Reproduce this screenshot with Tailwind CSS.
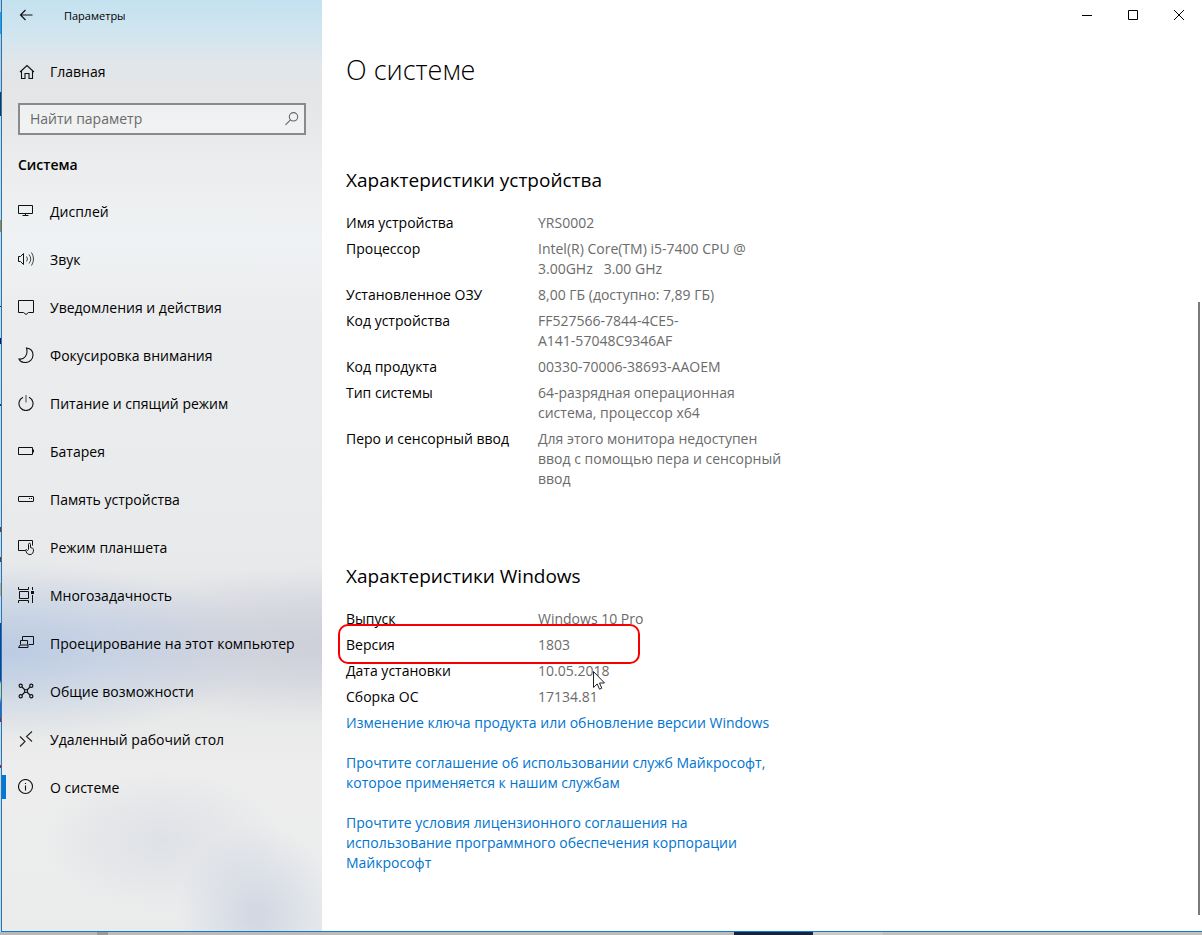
<!DOCTYPE html>
<html lang="ru">
<head>
  <meta charset="UTF-8" />
  <meta name="viewport" content="width=device-width, initial-scale=1" />
  <title>Параметры</title>
  <script src="https://cdn.jsdelivr.net/npm/@tailwindcss/browser@4"></script>
</head>
<body class="min-h-screen flex flex-col bg-[#c6c6c6] font-['Open_Sans','Noto_Sans',sans-serif] text-sm leading-5 text-black">

  <div class="flex-1 flex">
    <!-- Desktop edge on the left -->
    <div class="w-px shrink-0 bg-[linear-gradient(to_bottom,#c6c6c6_0_12px,#2a9fd6_12px_34px,#c6c6c6_34px_92px,#333_92px_116px,#d4d4d4_116px_220px,#c87d10_220px_232px,#d4d4d4_232px_306px,#222_306px_307px,#d4d4d4_307px_338px,#101050_338px_344px,#d4d4d4_344px_404px,#333_404px_406px,#d4d4d4_406px_527px,#7a3a10_527px_532px,#d4d4d4_532px_557px,#7a3a10_557px_562px,#d4d4d4_562px_583px,#e0a860_583px_596px,#d4d4d4_596px_623px,#1c3f80_623px_680px,#d8d080_684px_697px,#3a62b0_703px_718px,#c01818_718px_722px,#d4d4d4_722px_765px,#c01818_765px_768px,#d4d4d4_768px)]"></div>

    <!-- Settings window -->
    <div class="flex-1 flex border-l border-b border-[#1979ca]">

      <aside class="w-80 shrink-0 bg-[radial-gradient(ellipse_80px_90px_at_255px_915px,#c4cbde99_10%,#c4cbde55_50%,#c4cbde00),radial-gradient(ellipse_120px_70px_at_160px_840px,#d6dae299_0%,#d6dae255_50%,#d6dae200),radial-gradient(ellipse_260px_90px_at_0px_650px,#b4c8e4cc_0%,#b4c8e466_50%,#b4c8e400),radial-gradient(ellipse_240px_80px_at_320px_645px,#c6c8d499_0%,#c6c8d455_50%,#c6c8d400),linear-gradient(to_bottom,#c3e2ef_0px,#cfe5ef_30px,#e0e6ea_62px,#e4e5e6_90px,#ebeced_160px,#eff2f4_240px,#ebecee_320px,#eaebec_480px,#e8e9ea_570px,#d9dce3_630px,#d9dce3_655px,#e7e8e8_710px,#ededed_770px,#eaecec_930px)]">
        <div class="h-8 flex items-center pl-4 text-[11px]">
          <button type="button" aria-label="Назад" class="mr-[30px]">
            <svg class="size-4" viewBox="0 0 16 16" fill="none" stroke="#111" stroke-width="1.2"><path d="M2 7H14.500M7.500 2l-5 5 5 5" /></svg>
          </button>
          <span>Параметры</span>
        </div>

        <a href="#" class="mt-4 h-12 flex items-center gap-4 pl-4">
          <svg class="size-4 overflow-visible" viewBox="0 0 16 16" fill="none" stroke="#111" stroke-width="1.1"><path d="M2 8 9 1.500 16 8M3.500 6.800v7.700H7V9.500h4v5h3.500V6.800" /></svg>
          Главная
        </a>

        <div class="mx-4 mt-[7px] mb-5 h-8 relative">
          <input id="search" type="text" aria-label="Найти параметр" placeholder="Найти параметр" class="block w-full h-8 border-2 border-[#8a8a8a] bg-white/40 pl-2.5 pr-8 pb-0.5 placeholder:text-[#6a6a6a]" />
          <svg class="absolute right-1.5 top-2 size-4" viewBox="0 0 16 16" fill="none" stroke="#666" stroke-width="1.100"><circle cx="9.500" cy="5.800" r="4.200" /><path d="M6.500 8.800 1.500 13.800" /></svg>
        </div>

        <h2 class="pl-4 mb-[13px] font-semibold">Система</h2>

        <nav class="[&_svg]:mb-0.5">
          <a href="#" class="h-12 flex items-center gap-4 pl-4">
            <svg class="size-4" viewBox="0 0 16 16" fill="none" stroke="#111"><path d="M.5 2.500h14v8H.500zM7.500 10.500v2M4.500 12.500h6" /></svg>
            Дисплей
          </a>
          <a href="#" class="h-12 flex items-center gap-4 pl-4">
            <svg class="size-4 overflow-visible" viewBox="0 0 16 16" fill="none" stroke="#111"><path d="M.5 5.500h2L5.500 2.500v11L2.500 10.500h-2z" /><path d="M8.500 5.500q2 2.500 0 5M11 3.500q3.500 4.500 0 9M13.500 1.500q4 6.500 0 13" stroke="#444" /></svg>
            Звук
          </a>
          <a href="#" class="h-12 flex items-center gap-4 pl-4">
            <svg class="size-4" viewBox="0 0 16 16" fill="none" stroke="#111"><path d="M.5 1.500h15v12h-5L8 15.500l-2.500-2H.500z" /></svg>
            Уведомления и действия
          </a>
          <a href="#" class="h-12 flex items-center gap-4 pl-4">
            <svg class="size-4" viewBox="0 0 16 16" fill="none" stroke="#111" stroke-width="1.1"><path d="M8.500 1C13 1.500 15 4.500 15 8c0 4.500-3.500 7.500-7.500 7.500-3 0-5.500-1-6.500-3.500C6 13 10.500 8 8.500 1z" /></svg>
            Фокусировка внимания
          </a>
          <a href="#" class="h-12 flex items-center gap-4 pl-4">
            <svg class="size-4" viewBox="0 0 16 16" fill="none" stroke="#111" stroke-width="1.1"><path d="M5 2.200a7 7 0 1 0 6 0" /><path d="M8 0v7.500" stroke="#555" /></svg>
            Питание и спящий режим
          </a>
          <a href="#" class="h-12 flex items-center gap-4 pl-4">
            <svg class="size-4" viewBox="0 0 16 16" fill="none" stroke="#111"><path d="M.5 4.500h14v7H.500zM15.500 6.500v3" /></svg>
            Батарея
          </a>
          <a href="#" class="h-12 flex items-center gap-4 pl-4">
            <svg class="size-4" viewBox="0 0 16 16" fill="none" stroke="#111"><rect x=".5" y="5.500" width="15" height="5" rx=".5" /><path d="M11 7.500h1M13 7.500h1" /></svg>
            Память устройства
          </a>
          <a href="#" class="h-12 flex items-center gap-4 pl-4">
            <svg class="size-4" viewBox="0 0 16 16" fill="none" stroke="#111"><path d="M7 11.500H.500v-10h14v5" /><path d="M10.500 10.500V5.500q0-1.200 1-1.200t1 1.200v3l2 .8q1 .3 1 1.400c0 3-1 4.800-3.500 4.800-2 0-3-.8-3.700-2.500l-.8-2q.8-1 2 .5z" /></svg>
            Режим планшета
          </a>
          <a href="#" class="h-12 flex items-center gap-4 pl-4">
            <svg class="size-4" viewBox="0 0 16 16" fill="none" stroke="#111"><path d="M.5 0v2.500h10V0M1.500 4.500h9v7h-9zM.5 16v-2.500h10V16M14.500 0v3M14.500 8v8" /><path d="M13 5.500h3" stroke-width="3" /></svg>
            Многозадачность
          </a>
          <a href="#" class="h-12 flex items-center gap-4 pl-4">
            <svg class="size-4" viewBox="0 0 16 16" fill="none" stroke="#111"><path d="M4.500 5.500v-4h11v8h-5M2.500 9.500v-4h7v4M2 10l-1.500 2.500h9.500V10z" /></svg>
            Проецирование на этот компьютер
          </a>
          <a href="#" class="h-12 flex items-center gap-4 pl-4">
            <svg class="size-4" viewBox="0 0 16 16" fill="none" stroke="#111" stroke-width="1.200"><circle cx="2.700" cy="2.700" r="1.600" /><circle cx="13.300" cy="2.700" r="1.600" /><circle cx="2.700" cy="13.300" r="1.600" /><circle cx="13.300" cy="13.300" r="1.600" /><circle cx="8" cy="8" r="1.500" /><path d="m4 4 3 3m2 2 3 3m0-8L9 7M7 9l-3 3" /></svg>
            Общие возможности
          </a>
          <a href="#" class="h-12 flex items-center gap-4 pl-4">
            <svg class="size-4" viewBox="0 0 16 16" fill="none" stroke="#222" stroke-width="1.100"><path d="m2 5.500 5 5-5 5M14 .5l-5.500 5 5.500 5" /></svg>
            Удаленный рабочий стол
          </a>
          <a href="#" aria-current="page" class="relative h-12 flex items-center gap-4 pl-4 before:absolute before:left-0 before:top-[11px] before:h-6 before:w-1 before:bg-[#0078d7]">
            <svg class="size-4" viewBox="0 0 16 16" fill="none" stroke="#111" stroke-width="1.100"><circle cx="7.500" cy="7.500" r="7" /><path d="M7.500 6.500v5M7.500 4v1" /></svg>
            О системе
          </a>
        </nav>
      </aside>

      <main class="relative flex-1 bg-white pl-6 pb-14">
        <!-- Window controls -->
        <div class="absolute right-0 top-0 flex">
          <button type="button" aria-label="Свернуть" class="w-[46px] h-[30px] flex items-center justify-center"><svg class="size-2.5" viewBox="0 0 10 10" stroke="#000"><path d="M0 5.500h10" /></svg></button>
          <button type="button" aria-label="Развернуть" class="w-[46px] h-[30px] flex items-center justify-center"><svg class="size-2.5" viewBox="0 0 10 10" fill="none" stroke="#000"><path d="M.5.500h9v9h-9z" /></svg></button>
          <button type="button" aria-label="Закрыть" class="w-[46px] h-[30px] flex items-center justify-center"><svg class="size-2.5" viewBox="0 0 10 10" stroke="#000"><path d="m0 0 10 10M10 0 0 10" /></svg></button>
        </div>
        <div class="absolute right-0.5 top-[302px] bottom-4 w-0.5 bg-[#7a7a7a]"></div>

        <h1 class="pt-[50px] text-[27px] leading-10 font-light">О системе</h1>

        <section class="mt-[77px]">
          <h2 class="text-[19px] leading-[26px]">Характеристики устройства</h2>
          <table class="mt-5 w-[448px] table-fixed text-left">
            <tbody>
              <tr><th scope="row" class="w-48 pb-1.5 align-top font-normal">Имя устройства</th><td class="pb-1.5 text-[#6b6b6b]">YRS0002</td></tr>
              <tr><th scope="row" class="pb-1.5 align-top font-normal">Процессор</th><td class="pb-1.5 text-[#6b6b6b]">Intel(R) Core(TM) i5-7400 CPU @<br />3.00GHz &nbsp; 3.00 GHz</td></tr>
              <tr><th scope="row" class="pb-1.5 align-top font-normal">Установленное ОЗУ</th><td class="pb-1.5 text-[#6b6b6b]">8,00 ГБ (доступно: 7,89 ГБ)</td></tr>
              <tr><th scope="row" class="pb-1.5 align-top font-normal">Код устройства</th><td class="pb-1.5 text-[#6b6b6b]">FF527566-7844-4CE5-<br />A141-57048C9346AF</td></tr>
              <tr><th scope="row" class="pb-1.5 align-top font-normal">Код продукта</th><td class="pb-1.5 text-[#6b6b6b]">00330-70006-38693-AAOEM</td></tr>
              <tr><th scope="row" class="pb-1.5 align-top font-normal">Тип системы</th><td class="pb-1.5 text-[#6b6b6b]">64-разрядная операционная<br />система, процессор x64</td></tr>
              <tr><th scope="row" class="pb-1.5 align-top font-normal">Перо и сенсорный ввод</th><td class="pb-1.5 text-[#6b6b6b]">Для этого монитора недоступен<br />ввод с помощью пера и сенсорный<br />ввод</td></tr>
            </tbody>
          </table>
        </section>

        <section class="mt-17">
          <h2 class="text-[19px] leading-[26px]">Характеристики Windows</h2>
          <div class="relative mt-5">
            <table class="w-[448px] table-fixed text-left">
              <tbody>
                <tr><th scope="row" class="w-48 pb-1.5 font-normal">Выпуск</th><td class="pb-1.5 text-[#6b6b6b]">Windows 10 Pro</td></tr>
                <tr><th scope="row" class="pb-1.5 font-normal">Версия</th><td class="pb-1.5 text-[#6b6b6b]">1803</td></tr>
                <tr><th scope="row" class="pb-1.5 font-normal">Дата установки</th><td class="pb-1.5 text-[#6b6b6b]">10.05.2018</td></tr>
                <tr><th scope="row" class="pb-1.5 font-normal">Сборка ОС</th><td class="pb-1.5 text-[#6b6b6b]">17134.81</td></tr>
              </tbody>
            </table>
            <!-- Version callout and mouse pointer -->
            <div class="absolute -left-2 top-[15px] w-[302px] h-10 rounded-[10px] border-2 border-[#f80000]"></div>
            <svg class="absolute left-[247px] top-[62px] w-3 h-[19px]" viewBox="0 0 12 19" fill="#fff" stroke="#222"><path d="M.5.500v16l3.700-3.600 2.300 5.300 2.300-1-2.300-5.200h5z" /></svg>
          </div>
          <p><a href="#" class="text-[#0074cf]">Изменение ключа продукта или обновление версии Windows</a></p>
          <p class="mt-5"><a href="#" class="text-[#0074cf]">Прочтите соглашение об использовании служб Майкрософт,<br />которое применяется к нашим службам</a></p>
          <p class="mt-5"><a href="#" class="text-[#0074cf]">Прочтите условия лицензионного соглашения на<br />использование программного обеспечения корпорации<br />Майкрософт</a></p>
        </section>
      </main>
    </div>
  </div>

  <!-- Desktop edge below the window -->
  <div class="h-[3px] shrink-0 bg-[linear-gradient(to_right,#b8b8b8_0_97px,#999_97px_108px,#bcbcbc_108px_734px,#14233f_734px_813px,#cacaca_813px_883px,#c0c0c0_883px)]"></div>

</body>
</html>
